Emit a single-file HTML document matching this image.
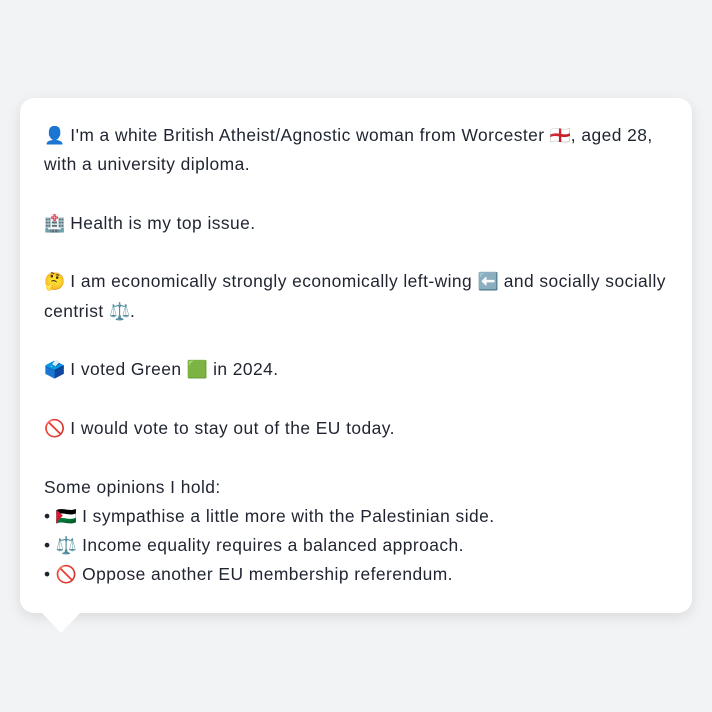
<!DOCTYPE html>
<html><head><meta charset="utf-8"><style>
html,body{margin:0;padding:0;background:#f2f3f5;width:712px;height:712px;overflow:hidden}
.card{position:absolute;left:20px;top:98px;width:624px;height:471px;padding:23px 24px 21px;background:#fff;border-radius:14px;box-shadow:0 4px 14px rgba(0,0,0,0.10);font-family:"Liberation Sans",sans-serif;font-size:17.4px;letter-spacing:0.45px;line-height:29.3px;color:#1f2430}
.tail{position:absolute;left:41px;top:612px;width:0;height:0;border-left:20px solid transparent;border-right:20px solid transparent;border-top:21px solid #fff}
p{margin:0 0 29.3px 0}
.e{display:inline-block;width:21px;font-size:17px;line-height:1;letter-spacing:0}
</style></head><body>
<div class="card">
<p><span class="e">👤</span> I'm a white British Atheist/Agnostic woman from Worcester <span class="e">🏴󠁧󠁢󠁥󠁮󠁧󠁿</span>, aged 28, with a university diploma.</p>
<p><span class="e">🏥</span> Health is my top issue.</p>
<p><span class="e">🤔</span> I am economically strongly economically left-wing <span class="e">⬅️</span> and socially socially centrist <span class="e">⚖️</span>.</p>
<p><span class="e">🗳️</span> I voted Green <span class="e">🟩</span> in 2024.</p>
<p><span class="e">🚫</span> I would vote to stay out of the EU today.</p>
<p style="margin:0">Some opinions I hold:<br>
• <span class="e">🇵🇸</span> I sympathise a little more with the Palestinian side.<br>
• <span class="e">⚖️</span> Income equality requires a balanced approach.<br>
• <span class="e">🚫</span> Oppose another EU membership referendum.</p>
</div>
<div class="tail"></div>
</body></html>
